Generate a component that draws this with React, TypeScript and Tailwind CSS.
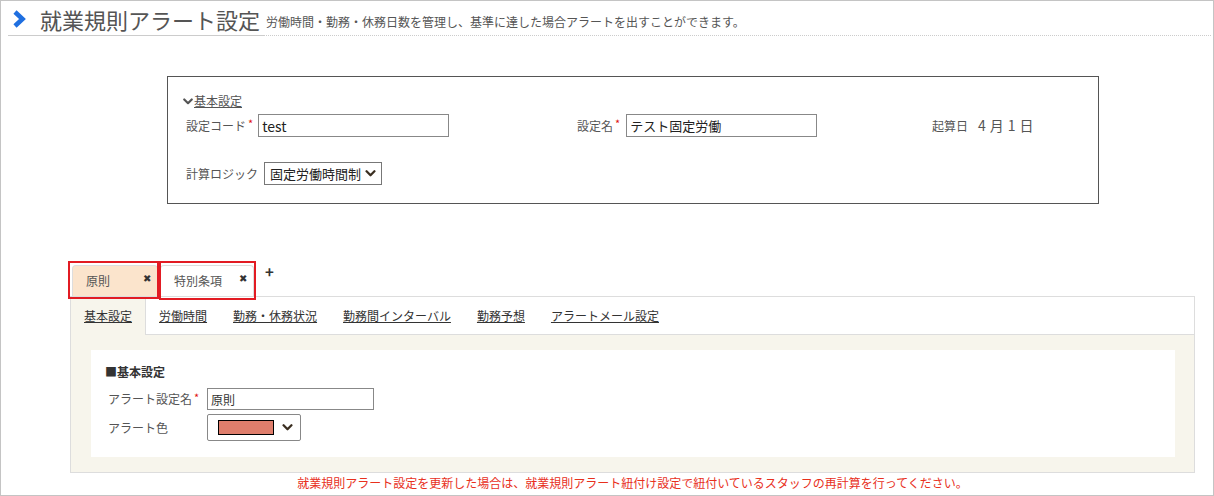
import React from "react";

const Chev = ({ className = "" }: { className?: string }) => (
  <svg viewBox="0 0 12 8" className={className} fill="none">
    <polyline points="1.5,1.5 6,6 10.5,1.5" stroke="currentColor" strokeWidth="2.6" strokeLinecap="round" strokeLinejoin="round" />
  </svg>
);

const Req = () => <span className="text-[#e01010] text-[11px] ml-[2px] relative top-[-2px]">*</span>;

export default function App() {
  const tabs = ["基本設定", "労働時間", "勤務・休務状況", "勤務間インターバル", "勤務予想", "アラートメール設定"];
  return (
    <div className="w-[1214px] h-[496px] border border-[#c4c4c4] bg-white overflow-hidden text-[#555] font-['Noto_Sans_CJK_JP',sans-serif]">
      {/* header */}
      <div className="flex items-end ml-[7px] mr-[2px] mt-[5px]">
        <div className="flex items-center border-b border-[#ccc] pb-[3px] pr-[3px]">
          <svg viewBox="0 0 14 18" className="ml-[4px] w-[14px] h-[18px]" fill="none">
            <polyline points="3,2 10.5,9 3,16" stroke="#1f6fe0" strokeWidth="4.6" strokeLinejoin="miter" />
          </svg>
          <span className="ml-[14px] text-[22px] leading-[26px]">就業規則アラート設定</span>
        </div>
        <div className="flex-1 border-b border-dotted border-[#ccc] pb-[5px] pl-[3px] text-[12px] leading-[16px]">
          労働時間・勤務・休務日数を管理し、基準に達した場合アラートを出すことができます。
        </div>
      </div>

      {/* basic settings box */}
      <div className="mt-[40px] ml-[166px] w-[932px] h-[128px] border border-[#555] pl-[15px] pt-[16px]">
        <div className="flex items-center text-[12px] leading-[16px]">
          <Chev className="w-[10px] h-[7px] text-[#555]" />
          <span className="underline ml-[1px]">基本設定</span>
        </div>
        <div className="flex items-center mt-[5px] ml-[3px] text-[12px]">
          <div className="w-[391px] flex items-center">
            <span>設定コード</span>
            <Req />
            <input readOnly value="test" className="ml-[5px] w-[191px] h-[23px] border border-[#888] px-[3px] text-[14px] text-[#222] outline-none" />
          </div>
          <div className="w-[355px] flex items-center">
            <span>設定名</span>
            <Req />
            <input readOnly value="テスト固定労働" className="ml-[6px] w-[191px] h-[23px] border border-[#888] px-[3px] text-[13px] text-[#222] outline-none" />
          </div>
          <div className="flex items-center">
            <span>起算日</span>
            <span className="ml-[10px] text-[14px] tracking-[4px] text-[#555]">4月1日</span>
          </div>
        </div>
        <div className="flex items-center mt-[25px] ml-[3px] text-[12px]">
          <span>計算ロジック</span>
          <div className="ml-[6px] w-[118px] h-[23px] border border-[#777] flex items-center pl-[5px] pr-[5px] text-[13px] text-[#222]">
            <span className="flex-1">固定労働時間制</span>
            <Chev className="w-[11px] h-[7px] text-[#3a2e20]" />
          </div>
        </div>
      </div>

      {/* tabs */}
      <div className="flex items-end ml-[71px] mt-[61px] h-[31px]">
        <div className="relative w-[86px] h-[31px] bg-[#fbe4cc] border border-[#ddd] border-b-0 rounded-t-[4px] flex items-center pl-[13px] pr-[6px] text-[12px]">
          <span className="flex-1">原則</span>
          <span className="relative top-[-4px] text-[10px] text-[#333]">✖</span>
          <span className="absolute left-[-5px] top-[-5px] w-[91px] h-[38px] border-2 border-[#e21b23]" />
        </div>
        <div className="relative ml-[2px] w-[94px] h-[31px] bg-white border border-[#ddd] border-b-0 rounded-t-[4px] flex items-center pl-[13px] pr-[6px] text-[12px]">
          <span className="flex-1">特別条項</span>
          <span className="relative top-[-4px] text-[10px] text-[#333]">✖</span>
          <span className="absolute left-[-2px] top-[-5px] w-[97px] h-[39px] border-2 border-[#e21b23]" />
        </div>
        <span className="self-start ml-[11px] mt-[-3px] text-[15px] font-bold text-[#333] leading-[20px]">+</span>
      </div>

      {/* panel */}
      <div className="ml-[69px] w-[1125px] h-[177px] border border-[#ddd] flex flex-col">
        <div className="flex h-[38px] text-[12px] text-[#333]">
          {tabs.map((t, i) => (
            <div
              key={t}
              className={
                i === 0
                  ? "px-[13px] flex items-center bg-[#f7f5ec] border-r border-[#ddd]"
                  : "px-[13px] flex items-center border-b border-[#ddd]"
              }
            >
              <span className="underline">{t}</span>
            </div>
          ))}
          <div className="flex-1 border-b border-[#ddd]" />
        </div>
        <div className="flex-1 bg-[#f7f5ec] pl-[20px] pr-[19px] pt-[15px]">
          <div className="bg-white h-[107px] pl-[14px] pt-[14px] text-[12px]">
            <div className="font-bold text-[#333] leading-[16px]">■基本設定</div>
            <div className="flex items-center mt-[8px] ml-[3px]">
              <div className="w-[99px] flex items-center">
                <span>アラート設定名</span>
                <Req />
              </div>
              <input readOnly value="原則" className="w-[167px] h-[22px] border border-[#888] px-[3px] text-[12px] text-[#333] outline-none" />
            </div>
            <div className="flex items-center mt-[4px] ml-[3px]">
              <div className="w-[99px]">アラート色</div>
              <div className="w-[94px] h-[27px] border border-[#888] rounded-[2px] flex items-center pl-[10px] pr-[7px]">
                <span className="w-[56px] h-[15px] bg-[#df7e6c] border border-black" />
                <span className="flex-1" />
                <Chev className="w-[11px] h-[7px] text-[#3a2e20]" />
              </div>
            </div>
          </div>
        </div>
      </div>

      <div className="ml-[69px] w-[1125px] text-center mt-[3px] text-[12px] leading-[14px] text-[#e8301c]">
        就業規則アラート設定を更新した場合は、就業規則アラート紐付け設定で紐付いているスタッフの再計算を行ってください。
      </div>
    </div>
  );
}
